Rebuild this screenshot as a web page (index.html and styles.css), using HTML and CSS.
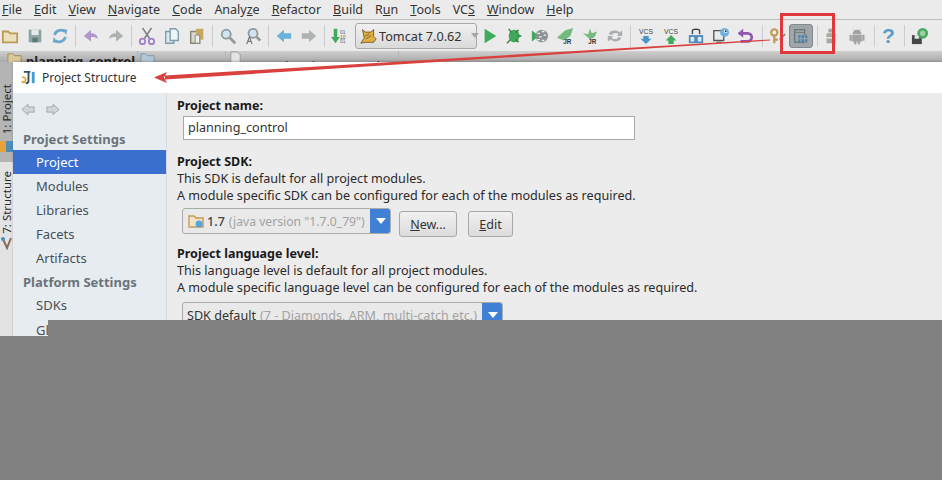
FILE: index.html
```html
<!DOCTYPE html>
<html lang="en">
<head>
<meta charset="utf-8">
<title>Project Structure</title>
<link rel="stylesheet" href="styles.css">
</head>
<body>
<div class="page">
  <nav class="menubar">
    <span><u>F</u>ile</span><span><u>E</u>dit</span><span><u>V</u>iew</span><span><u>N</u>avigate</span><span><u>C</u>ode</span><span>Analy<u>z</u>e</span><span><u>R</u>efactor</span><span><u>B</u>uild</span><span>R<u>u</u>n</span><span><u>T</u>ools</span><span>VC<u>S</u></span><span><u>W</u>indow</span><span><u>H</u>elp</span>
  </nav>

  <div class="toolbar">
    <i class="ti"><svg viewBox="0 0 20 20"><path d="M2 5h6l2 2h8v10H2z" fill="#ece0bc" stroke="#bb9a55" stroke-width="2"/></svg></i>
    <i class="ti"><svg viewBox="0 0 20 20"><path d="M3 3h14v14H3z" fill="#8ba3a3"/><path d="M6 3h8v6H6z" fill="#e6eaea"/><path d="M7 12h6v5H7z" fill="#5c7777"/></svg></i>
    <i class="ti"><svg viewBox="0 0 20 20"><path d="M15 5a7 7 0 0 0-11 4M5 15a7 7 0 0 0 11-4" fill="none" stroke="#6aa8cc" stroke-width="3"/><path d="M12 2l6 1-1 6zM8 18l-6-1 1-6z" fill="#6aa8cc"/></svg></i>
    <b class="sep"></b>
    <i class="ti"><svg viewBox="0 0 20 20"><path d="M2 10l8-7v4c4 0 7 2 8 6-3-2-5-2-8-2v5z" fill="#b296cc"/></svg></i>
    <i class="ti"><svg viewBox="0 0 20 20"><path d="M18 10l-8-7v4c-4 0-7 2-8 6 3-2 5-2 8-2v5z" fill="#adb1b1"/></svg></i>
    <b class="sep"></b>
    <i class="ti"><svg viewBox="0 0 20 20"><path d="M5 1l8 12M15 1L7 13" stroke="#7b8285" stroke-width="1.8"/><circle cx="5" cy="16" r="3" fill="none" stroke="#a47fc6" stroke-width="2"/><circle cx="15" cy="16" r="3" fill="none" stroke="#a47fc6" stroke-width="2"/></svg></i>
    <i class="ti"><svg viewBox="0 0 20 20"><path d="M3 5h9v13H3z" fill="#dfe8ec" stroke="#7f9fb0" stroke-width="1.6"/><path d="M8 2h6l3 3v10H8z" fill="#eef3f5" stroke="#7f9fb0" stroke-width="1.6"/></svg></i>
    <i class="ti"><svg viewBox="0 0 20 20"><path d="M3 5h10v13H3z" fill="#d8d8cc" stroke="#85857a" stroke-width="1.6"/><path d="M9 2h8v12H9z" fill="#c9a660"/><path d="M8 9h5v9H8z" fill="#eef0ee" stroke="#85857a"/></svg></i>
    <b class="sep"></b>
    <i class="ti"><svg viewBox="0 0 20 20"><circle cx="8" cy="8" r="5" fill="#cfe4ee" stroke="#8c989d" stroke-width="2"/><path d="M12 12l6 6" stroke="#969696" stroke-width="3"/></svg></i>
    <i class="ti"><svg viewBox="0 0 20 20"><circle cx="10" cy="7" r="5" fill="#cfe4ee" stroke="#8c989d" stroke-width="2"/><path d="M14 11l4 4" stroke="#969696" stroke-width="3"/><path d="M3 19l3-8 3 8M4 16h4" fill="none" stroke="#777" stroke-width="1.3"/></svg></i>
    <b class="sep"></b>
    <i class="ti"><svg viewBox="0 0 20 20"><path d="M2 10l8-7v4h8v6h-8v4z" fill="#6bb2da"/></svg></i>
    <i class="ti"><svg viewBox="0 0 20 20"><path d="M18 10l-8-7v4H2v6h8v4z" fill="#aeb2b2"/></svg></i>
    <b class="sep"></b>
    <i class="ti"><svg viewBox="0 0 20 20"><path d="M3 2h4v9h3l-5 7-5-7h3z" fill="#45a85f"/><text x="10" y="8" class="mini">01</text><text x="10" y="13" class="mini">10</text><text x="10" y="18" class="mini">01</text></svg></i>
    <div class="runcombo">
      <svg class="cat" viewBox="0 0 20 20"><path d="M3 3l3 3h7l3-3v8l3 3-3 4H7l-6 1 4-6z" fill="#e0b040" stroke="#6b5320"/><path d="M7 14l6-4M6 11l5-3" stroke="#6b5320"/></svg>
      <span>Tomcat 7.0.62</span>
      <em class="caret-gray"></em>
    </div>
    <i class="ti"><svg viewBox="0 0 20 20"><path d="M4 2l13 8-13 8z" fill="#3faa5b"/></svg></i>
    <i class="ti"><svg viewBox="0 0 20 20"><ellipse cx="9" cy="10" rx="6" ry="7" fill="#3fa85a"/><path d="M14 3l-3 3M17 10h-4M14 17l-3-3M3 2l3 4M1 18l4-4" stroke="#2d7a42" stroke-width="1.5"/></svg></i>
    <i class="ti"><svg viewBox="0 0 20 20"><path d="M1 4l8 6-8 6z" fill="#3faa5b"/><circle cx="12" cy="10" r="7" fill="#8b9295"/><path d="M7 7h3M12 5h3M9 11h3M14 9h3M7 14h3M12 15h3" stroke="#eee" stroke-width="1.5"/></svg></i>
    <i class="ti"><svg viewBox="0 0 20 20"><path d="M1 12L10 4l9-3-3 9-7 5z" fill="#74ba7e"/><text x="8" y="19" class="jr">JR</text></svg></i>
    <i class="ti"><svg viewBox="0 0 20 20"><path d="M2 7l6 1 2-6 2 5 6-2-3 6-5 3-3-3z" fill="#74ba7e"/><text x="8" y="19" class="jr">JR</text></svg></i>
    <i class="ti"><svg viewBox="0 0 20 20"><path d="M3 8c2-5 9-5 12-2l3-2v6h-6l2-2c-2-2-6-2-8 1zM17 12c-2 5-9 5-12 2l-3 2v-6h6l-2 2c2 2 6 2 8-1z" fill="#a8adaf"/></svg></i>
    <b class="sep"></b>
    <i class="ti"><svg viewBox="0 0 20 20"><text x="10" y="8" class="vcs">VCS</text><path d="M10 19l-6-6h3V10h6v3h3z" fill="#4a94cc"/></svg></i>
    <i class="ti"><svg viewBox="0 0 20 20"><text x="10" y="8" class="vcs">VCS</text><path d="M10 9l6 6h-3v4H7v-4H4z" fill="#42a85c"/></svg></i>
    <i class="ti"><svg viewBox="0 0 20 20"><path d="M6 8V4c0-2 8-2 8 0v4" fill="none" stroke="#444" stroke-width="1.5"/><path d="M2 9h16v9H2z" fill="#4f8dba"/><path d="M4 11h4v5H4zM12 11h4v5h-4z" fill="#dfe9f0"/></svg></i>
    <i class="ti"><svg viewBox="0 0 20 20"><path d="M2 4h11v11H2z" fill="#e8ecee" stroke="#555" stroke-width="1.5"/><circle cx="14" cy="6" r="5" fill="#6fb1de"/><path d="M14 3v3h3" stroke="#fff"/><path d="M5 17h6" stroke="#888" stroke-width="2"/></svg></i>
    <i class="ti undo"><svg viewBox="0 0 20 20"><path d="M3 7h10a4 4 0 0 1 0 9H5" fill="none" stroke="#8f55b0" stroke-width="3"/><path d="M8 2L2 7l6 5z" fill="#8f55b0"/></svg></i>
    <b class="sep before-wrench"></b>
    <i class="ti tight"><svg viewBox="0 0 20 20"><circle cx="7" cy="6" r="3.5" fill="none" stroke="#c09a50" stroke-width="2.4"/><path d="M7 10v8M7 14h4" stroke="#c09a50" stroke-width="2.4"/><path d="M13 14l6-6" stroke="#7d8c6d" stroke-width="2"/></svg></i>
    <i class="ti active"><svg viewBox="0 0 20 20"><path d="M3 3h11v14H3z" fill="none" stroke="#6d7275" stroke-width="1.4"/><path d="M4 6h9" stroke="#6d7275"/><path d="M7 9h10v8H7z" fill="#4c86a8"/><path d="M10 9v8M14 9v8M7 13h10" stroke="#a4abae"/></svg></i>
    <b class="sep wide"></b>
    <i class="ti tight"><svg viewBox="0 0 20 20"><path d="M7 2h6v4H7zM5 7h10v11H5z" fill="#a9a9a3"/><path d="M5 12h10" stroke="#eee" stroke-width="1.5"/></svg></i>
    <i class="ti droid"><svg viewBox="0 0 20 20"><path d="M5 8a5 5 0 0 1 10 0z" fill="#a3a3a3"/><path d="M5 9h10v7H5zM2 9h2v6H2zM16 9h2v6h-2zM7 16h2v3H7zM11 16h2v3H11zM6 2l2 3M14 2l-2 3" fill="#a3a3a3" stroke="#a3a3a3" stroke-width=".6"/></svg></i>
    <b class="sep after-droid"></b>
    <i class="ti"><span class="help">?</span></i>
    <b class="sep"></b>
    <i class="ti"><svg viewBox="0 0 20 20"><path d="M1 9h11v10H1z" fill="#45474a"/><path d="M4 9h5v4H4z" fill="#e8e8e8"/><circle cx="13" cy="7" r="6" fill="#4aa860"/><circle cx="13" cy="7" r="3" fill="#9ed0a8"/></svg></i>
  </div>

  <div class="tabstrip">
    <span class="tab first"><svg viewBox="0 0 16 16"><path d="M1 3h5l2 2h7v9H1z" fill="#d8c89c" stroke="#a58c55"/></svg><strong>planning_control</strong></span>
    <span class="tab second"><svg viewBox="0 0 16 16"><path d="M1 3h5l2 2h7v9H1z" fill="#b5c7d6" stroke="#7e97aa"/></svg></span>
    <span class="tab third"><svg viewBox="0 0 16 16"><path d="M3 1h7l3 3v11H3z" fill="#e4e4e4" stroke="#999"/></svg><strong class="thin">planning_control</strong></span>
  </div>

  <div class="workspace">
    <aside class="toolstrip">
      <div class="tool-project"><span class="vlabel">1: Project</span><em class="tp-icon"></em></div>
      <div class="tool-structure"><span class="vlabel">7: Structure</span><svg viewBox="0 0 12 14"><path d="M2 3l4 9 4-10" fill="none" stroke="#8a6a5a" stroke-width="2"/><circle cx="2" cy="3" r="2" fill="#4f8dba"/></svg></div>
    </aside>

    <section class="dialog">
      <header class="titlebar">
        <svg class="logo" viewBox="0 0 16 16"><path d="M1 8c2-1 4 0 4 2.500S2 14 1 12" fill="none" stroke="#e8a23c" stroke-width="2"/><path d="M3 2h7M8 2v10c0 2-2 2-3 2" fill="none" stroke="#2f4f66" stroke-width="2"/><path d="M13 2v12" stroke="#3f9ad6" stroke-width="3"/></svg>
        <h1>Project Structure</h1>
      </header>
      <div class="dialog-body">
        <nav class="sidebar">
          <div class="navarrows">
            <svg viewBox="0 0 16 14"><path d="M1 7l7-6v3h7v6H8v3z" fill="#d0d4d6" stroke="#9fa5a8"/></svg>
            <svg viewBox="0 0 16 14"><path d="M15 7L8 1v3H1v6h7v3z" fill="#d0d4d6" stroke="#9fa5a8"/></svg>
          </div>
          <h2 class="group-first">Project Settings</h2>
          <a class="item selected">Project</a>
          <a class="item">Modules</a>
          <a class="item">Libraries</a>
          <a class="item">Facets</a>
          <a class="item">Artifacts</a>
          <h2>Platform Settings</h2>
          <a class="item">SDKs</a>
          <a class="item">Global Libraries</a>
        </nav>
        <main class="content">
          <h3>Project name:</h3>
          <div class="textfield">planning_control</div>
          <h3 class="gap1">Project SDK:</h3>
          <p>This SDK is default for all project modules.</p>
          <p>A module specific SDK can be configured for each of the modules as required.</p>
          <div class="sdkrow">
            <div class="combo sdk">
              <svg viewBox="0 0 16 16"><path d="M1 3h5l2 2h7v9H1z" fill="#f0e4c8" stroke="#c79a55" stroke-width="1.4"/><circle cx="11" cy="11" r="3.5" fill="#56a5dc"/></svg>
              <span class="val">1.7</span><span class="hint">(java version "1.7.0_79")</span>
              <em class="caret"></em>
            </div>
            <button class="btn new"><u>N</u>ew...</button>
            <button class="btn edit"><u>E</u>dit</button>
          </div>
          <h3 class="gap2">Project language level:</h3>
          <p>This language level is default for all project modules.</p>
          <p>A module specific language level can be configured for each of the modules as required.</p>
          <div class="combo lang">
            <span class="val plain">SDK default</span><span class="hint">(7 - Diamonds, ARM, multi-catch etc.)</span>
            <em class="caret"></em>
          </div>
        </main>
      </div>
    </section>
  </div>

  <svg class="annotation" viewBox="0 0 942 480">
    <path d="M770 39.500L165 75.500 165 79.500 770 40.500z" fill="#d9413f"/>
    <path d="M154 77.500L167 72 164 77.500 167 83z" fill="#d9413f"/>
    <rect x="781.500" y="14.500" width="52" height="38" fill="none" stroke="#e0383c" stroke-width="3"/>
  </svg>
  <div class="mask mask-a"></div>
  <div class="mask mask-b"></div>
</div>
</body>
</html>
```

FILE: styles.css
```css
* { box-sizing: border-box; }
html, body { margin: 0; padding: 0; }
body { font-family: "Noto Sans", "Open Sans", sans-serif; color: #2a2a2a; background: #828282; }
.page { position: relative; width: 942px; height: 480px; overflow: hidden; background: #ededed; }

.menubar { height: 20px; display: flex; align-items: center; padding-left: 2px; gap: 12px; font-size: 12.5px; background: #ebebeb; border-bottom: 1px solid #bdbdbd; color: #333; }
.menubar span { white-space: nowrap; }

.toolbar { height: 31px; display: flex; align-items: center; margin-left: -3px; background: #ebebeb; }
.ti { width: 25px; height: 24px; flex: none; display: flex; align-items: center; justify-content: center; }
.ti svg { width: 18px; height: 18px; }
.sep { width: 6px; height: 22px; flex: none; background: linear-gradient(#cdcdcd, #cdcdcd) center / 1px 100% no-repeat; }
.sep.wide { width: 8px; }
.sep.before-wrench { width: 9px; }
.sep.after-droid { width: 4px; margin-left: -1px; }
.ti.tight { width: 20px; }
.ti.undo { margin-left: -1px; margin-right: 1px; }
.ti.droid { width: 32px; }
.ti.active { width: 24px; margin-left: 2px; background: #9fa6aa; border: 1px solid #83898c; border-radius: 3px; }
.mini { font: 5.5px "Liberation Sans", sans-serif; fill: #666; }
.jr { font: bold 7px "Liberation Sans", sans-serif; fill: #333; }
.vcs { font: 7.500px "Liberation Sans", sans-serif; fill: #444; text-anchor: middle; }
.help { font: bold 21px "Liberation Sans", sans-serif; color: #5b9cc9; }
.runcombo { width: 122px; height: 26px; margin-left: 3px; display: flex; align-items: center; padding-left: 4px; gap: 2px; font-size: 12.7px; white-space: nowrap; color: #333; background: linear-gradient(#f1f1f1, #dadada); border: 1px solid #a9a9a9; border-radius: 3px; flex: none; }
.cat { width: 17px; height: 17px; flex: none; }
.caret-gray { width: 0; height: 0; margin-left: 7px; border: 4px solid transparent; border-top: 5px solid #a5a5a5; border-bottom: 0; }

.tabstrip { height: 11px; display: flex; overflow: hidden; background: linear-gradient(#cfcfcf, #a9a9a9); padding-left: 5px; }
.tab { flex: none; display: flex; align-items: flex-start; gap: 4px; height: 30px; padding: 0 18px 0 2px; font-size: 13px; border-right: 1px solid #b5b5b5; }
.tab svg { width: 15px; height: 15px; flex: none; }
.tab strong { line-height: 18px; margin-top: 1px; color: #222; }
.tab.first { width: 133px; }
.tab.second { width: 88px; }
.tab .thin { font-weight: 400; margin-left: 30px; margin-top: 6px; }

.workspace { display: flex; height: 418px; }
.toolstrip { width: 13px; flex: none; background: #e3e3e3; }
.tool-project { height: 100px; background: #b4b4b4; display: flex; flex-direction: column; align-items: center; overflow: hidden; }
.tool-structure { height: 90px; padding-top: 9px; display: flex; flex-direction: column; align-items: center; }
.tool-structure svg { width: 12px; height: 14px; flex: none; margin-top: 2px; }
.vlabel { writing-mode: vertical-rl; transform: rotate(180deg); font-size: 11.5px; line-height: 13px; white-space: nowrap; color: #2a2a2a; margin-top: 22px; }
.tool-structure .vlabel { margin-top: 0; }
.tp-icon { width: 13px; height: 11px; flex: none; margin-top: 7px; background: linear-gradient(90deg, #e8a23c 50%, #4f8dba 50%); }

.dialog { flex: 1; display: flex; flex-direction: column; min-width: 0; box-shadow: 0 -1px 2px rgba(0,0,0,.2); }
.titlebar { height: 31px; flex: none; display: flex; align-items: center; gap: 6px; padding-left: 8px; background: #fff; }
.logo { width: 15px; height: 15px; }
.titlebar h1 { margin: 0; font-size: 12px; font-weight: 400; color: #333; }
.dialog-body { flex: 1; display: flex; min-height: 0; }

.sidebar { width: 154px; flex: none; background: #e7ecf1; border-right: 1px solid #d3d9df; color: #444; }
.navarrows { height: 32px; display: flex; align-items: center; gap: 11px; padding-left: 8px; }
.navarrows svg { width: 14px; height: 13px; }
.sidebar h2 { margin: 0; padding-left: 10px; height: 25px; line-height: 24px; font-size: 13px; font-weight: 700; color: #6a737a; white-space: nowrap; }
.sidebar h2.group-first { line-height: 28px; }
.item { display: block; height: 24px; line-height: 24px; padding-left: 23px; font-size: 13px; color: #4a4f54; white-space: nowrap; }
.item.selected { background: #3a6fd0; color: #fff; }
.sidebar h2 + .item:not(.selected) { height: 23px; line-height: 21px; }

.content { flex: 1; padding-left: 10px; background: #ececec; font-size: 12.6px; min-width: 0; }
.content h3 { margin: 0; height: 17px; line-height: 17px; font-size: 12.5px; font-weight: 700; color: #1a1a1a; margin-top: 4px; white-space: nowrap; }
.content h3.gap1 { margin-top: 13px; }
.content h3.gap2 { margin-top: 8px; }
.content p { margin: 0; height: 17px; line-height: 17px; color: #2a2a2a; white-space: nowrap; }
.textfield { width: 452px; height: 24px; margin: 2px 0 0 6px; padding-left: 4px; line-height: 22px; background: #fff; border: 1px solid #a8a8a8; color: #333; }
.sdkrow { display: flex; align-items: flex-start; margin-top: 4px; }
.combo { position: relative; display: flex; align-items: center; height: 26px; margin-left: 5px; padding-left: 5px; border: 1px solid #ababab; border-radius: 3px; background: #e9e9e9; white-space: nowrap; overflow: hidden; }
.combo svg { width: 16px; height: 16px; margin-right: 3px; flex: none; }
.combo .val { margin-right: 4px; color: #444; font-weight: 500; }
.combo .val.plain { color: #333; font-weight: 400; }
.combo .hint { color: #a3a3a3; }
.combo.sdk .hint { font-size: 12.2px; }
.combo .caret { position: absolute; top: -1px; right: -1px; bottom: -1px; width: 21px; background: #3f7fd6; }
.combo .caret::after { content: ""; position: absolute; left: 6px; top: 10px; border: 5px solid transparent; border-top: 6px solid #fff; border-bottom: 0; }
.combo.sdk { width: 209px; flex: none; }
.combo.lang { width: 321px; margin-top: 6px; padding-left: 4px; }
.btn { height: 26px; margin-top: 3px; padding: 0; font: 12.5px "Noto Sans", "Open Sans", sans-serif; color: #333; background: linear-gradient(#f0f0f0, #dcdcdc); border: 1px solid #a9a9a9; border-radius: 3px; flex: none; }
.btn.new { width: 58px; margin-left: 8px; }
.btn.edit { width: 45px; margin-left: 11px; }

.annotation { position: absolute; left: 0; top: 0; width: 942px; height: 480px; pointer-events: none; }
.mask { position: absolute; background: #828282; }
.mask-a { left: 48px; right: 0; top: 320px; height: 16px; }
.mask-b { left: 0; right: 0; top: 336px; bottom: 0; }
```
